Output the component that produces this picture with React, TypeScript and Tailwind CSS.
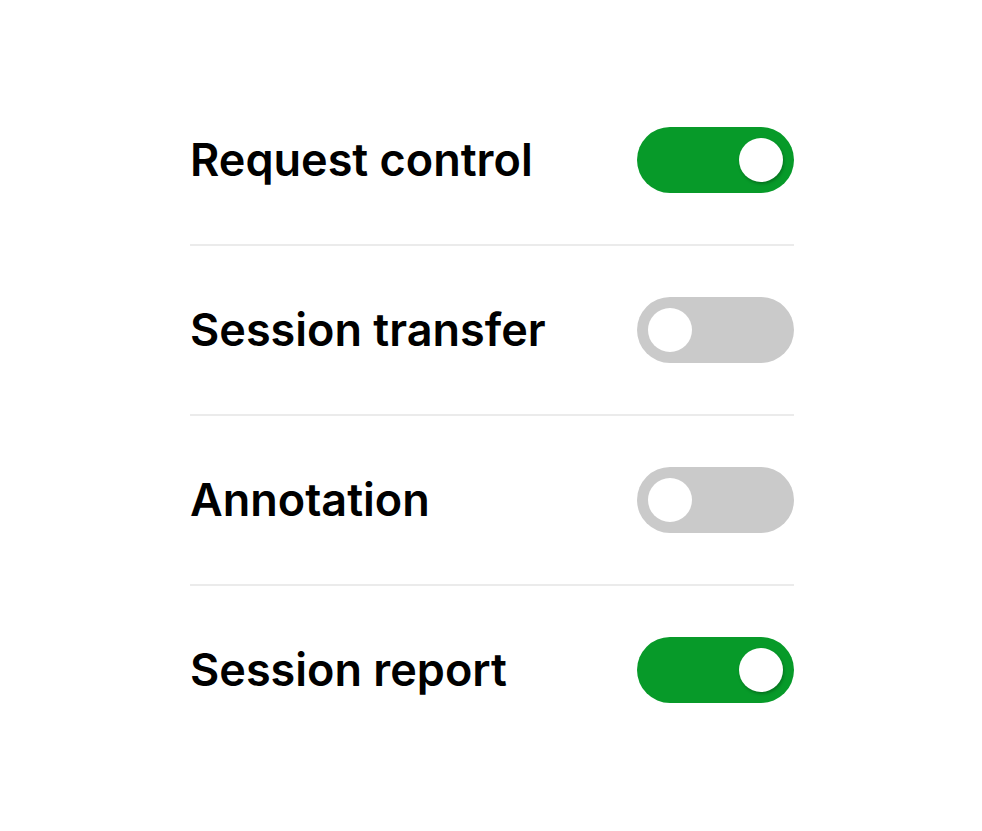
import { useState } from "react"

const items = [
  { label: "Request control", on: true },
  { label: "Session transfer", on: false },
  { label: "Annotation", on: false },
  { label: "Session report", on: true },
]

function Toggle({ on, onClick }: { on: boolean; onClick: () => void }) {
  return (
    <button
      onClick={onClick}
      className={`flex h-[66px] w-[157px] items-center rounded-full px-[11px] ${
        on ? "justify-end bg-[#079a29]" : "justify-start bg-[#cacaca]"
      }`}
    >
      <span
        className={`block h-[44px] w-[44px] rounded-full bg-white ${
          on ? "shadow-[1px_2px_3px_rgba(0,0,0,0.25)]" : ""
        }`}
      />
    </button>
  )
}

export default function App() {
  const [state, setState] = useState(items.map((i) => i.on))

  return (
    <div
      className="min-h-screen bg-white pt-[76px]"
      style={{ fontFamily: "Inter, 'Noto Sans', sans-serif" }}
    >
      <div className="ml-[190px] w-[604px]">
        {items.map((item, i) => (
          <div key={item.label}>
            {i > 0 && <div className="h-[2px] bg-[#ebebeb]" />}
            <div className="flex h-[168px] items-center justify-between">
              <span className="text-[45px] font-semibold tracking-normal text-black">
                {item.label}
              </span>
              <Toggle
                on={state[i]}
                onClick={() =>
                  setState(state.map((s, j) => (j === i ? !s : s)))
                }
              />
            </div>
          </div>
        ))}
      </div>
    </div>
  )
}
